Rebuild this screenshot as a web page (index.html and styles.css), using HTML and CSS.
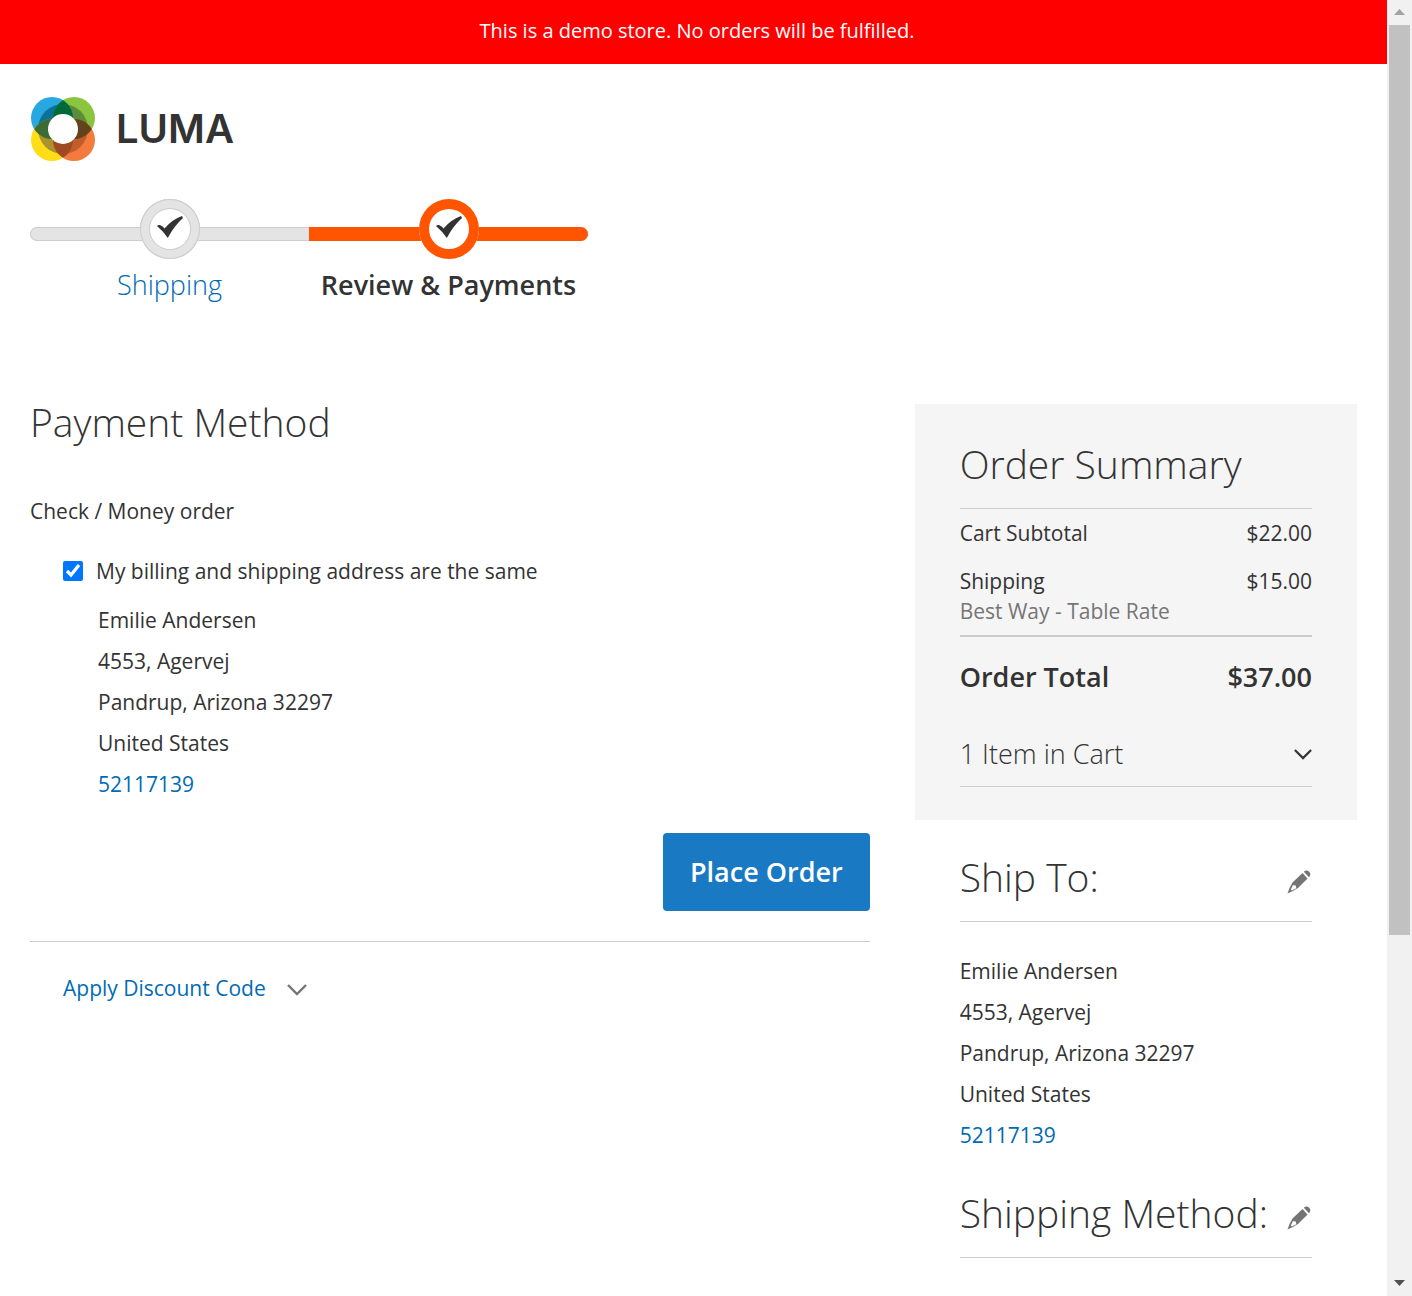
FILE: index.html
```html
<!DOCTYPE html>
<html lang="en">
<head>
<meta charset="utf-8">
<title>Checkout</title>
<link rel="stylesheet" href="styles.css">
</head>
<body>
<svg class="sprite" aria-hidden="true">
  <symbol id="check" viewBox="0 0 26 22"><path d="M0 10Q1 8.500 3 9Q6 10 7.500 12.500Q15 3.500 25 0L26 2Q17 10 10.800 22Q6 15 0 10Z"/></symbol>
  <symbol id="pencil" viewBox="0 0 24 24"><path d="M15.500 3L20.500 8.500L11 18L6 21L0.500 23.500L2.500 18L5.500 12.500ZM6 15L3.800 19.600L5 20.500L9.300 18.200L8.700 15.500Z" fill-rule="evenodd"/><path d="M16.800 1.800Q19.500 -0.800 22 1.500Q24.500 4 22 7.200Z"/></symbol>
  <symbol id="chevron" viewBox="0 0 20 12"><path d="M1 1L10 10L19 1" fill="none" stroke="currentColor" stroke-width="2.400"/></symbol>
</svg>
<div class="page">
  <p class="notice">This is a demo store. No orders will be fulfilled.</p>
  <header class="header">
    <a class="logo" href="#">
      <svg class="logo-mark" viewBox="0 0 66 66" aria-hidden="true">
        <defs>
          <clipPath id="tl"><circle cx="22" cy="22" r="21"/></clipPath>
          <clipPath id="tr"><circle cx="44" cy="22" r="21"/></clipPath>
          <clipPath id="bl"><circle cx="22" cy="44" r="21"/></clipPath>
          <clipPath id="br"><circle cx="44" cy="44" r="21"/></clipPath>
        </defs>
        <circle cx="22" cy="22" r="21" fill="#27a8e0"/>
        <circle cx="44" cy="22" r="21" fill="#8bc53f"/>
        <circle cx="22" cy="44" r="21" fill="#ffde17"/>
        <circle cx="44" cy="44" r="21" fill="#f47b3e"/>
        <circle cx="33" cy="33" r="25" fill="#0a7199" clip-path="url(#tl)"/>
        <circle cx="33" cy="33" r="25" fill="#5b8c3a" clip-path="url(#tr)"/>
        <circle cx="33" cy="33" r="25" fill="#a8932f" clip-path="url(#bl)"/>
        <circle cx="33" cy="33" r="25" fill="#c25e2e" clip-path="url(#br)"/>
        <g clip-path="url(#tl)">
          <circle cx="44" cy="22" r="21" fill="#006b38"/>
          <circle cx="22" cy="44" r="21" fill="#3d6b35"/>
        </g>
        <g clip-path="url(#br)">
          <circle cx="44" cy="22" r="21" fill="#63431c"/>
          <circle cx="22" cy="44" r="21" fill="#a04a22"/>
        </g>
        <circle cx="33" cy="33" r="15" fill="#fff"/>
      </svg>
      <span class="logo-name">LUMA</span>
    </a>
  </header>
  <ol class="steps">
    <li class="step"><span class="step-dot"><svg class="check"><use href="#check"/></svg></span><a class="step-label" href="#">Shipping</a></li>
    <li class="step step-active" aria-current="step"><span class="step-dot"><svg class="check"><use href="#check"/></svg></span><span class="step-label">Review &amp; Payments</span></li>
  </ol>
  <div class="checkout">
    <main class="payment">
      <h1 class="title">Payment Method</h1>
      <p class="method">Check / Money order</p>
      <div class="same"><input type="checkbox" id="same" checked><label for="same">My billing and shipping address are the same</label></div>
      <address class="address billing">Emilie Andersen<br>4553, Agervej<br>Pandrup, Arizona 32297<br>United States<br><a href="tel:52117139">52117139</a></address>
      <div class="actions"><button class="place-order" type="button">Place Order</button></div>
      <button class="discount" type="button">Apply Discount Code<svg class="discount-arrow"><use href="#chevron"/></svg></button>
    </main>
    <aside class="sidebar">
      <section class="summary">
        <h2 class="title ruled">Order Summary</h2>
        <table class="totals">
          <tbody>
            <tr><th scope="row">Cart Subtotal</th><td>$22.00</td></tr>
            <tr><th scope="row">Shipping<br><span class="carrier">Best Way - Table Rate</span></th><td>$15.00</td></tr>
          </tbody>
          <tfoot><tr><th scope="row">Order Total</th><td>$37.00</td></tr></tfoot>
        </table>
        <button class="cart-items" type="button">1 Item in Cart<svg class="cart-arrow"><use href="#chevron"/></svg></button>
      </section>
      <section class="info">
        <div class="info-head ruled"><h2 class="title">Ship To:</h2><button class="edit" type="button" aria-label="Edit shipping address"><svg><use href="#pencil"/></svg></button></div>
        <address class="address">Emilie Andersen<br>4553, Agervej<br>Pandrup, Arizona 32297<br>United States<br><a href="tel:52117139">52117139</a></address>
      </section>
      <section class="info">
        <div class="info-head ruled"><h2 class="title">Shipping Method:</h2><button class="edit" type="button" aria-label="Edit shipping method"><svg><use href="#pencil"/></svg></button></div>
      </section>
    </aside>
  </div>
</div>
<div class="scrollbar" aria-hidden="true">
  <svg class="arrow arrow-up" viewBox="0 0 11 6"><path d="M0 6L5.500 0L11 6Z"/></svg>
  <div class="track"><div class="thumb"></div></div>
  <svg class="arrow" viewBox="0 0 11 6"><path d="M0 0H11L5.500 6Z"/></svg>
</div>
</body>
</html>
```
FILE: styles.css
```css
*, *::before { box-sizing: border-box; }

body {
  margin: 0;
  display: flex;
  align-items: flex-start;
  background: #fff;
  color: #333;
  font: 400 21px/30px "Open Sans", "Noto Sans", sans-serif;
}

h1, h2, p, ol { margin: 0; padding: 0; }
a { color: #006bb4; text-decoration: none; }
svg { display: block; fill: currentColor; }
button { border: 0; padding: 0; background: none; color: inherit; font: inherit; cursor: pointer; }
.sprite { position: absolute; width: 0; height: 0; }

.page { flex: 1; min-width: 0; }

.notice {
  padding: 16px 38px 18px 45px;
  background: #f00;
  color: #fff;
  font-size: 20px;
  text-align: center;
}

.header { padding: 32px 30px 37px; }
.logo { display: inline-flex; align-items: center; gap: 20px; vertical-align: top; color: #333; }
.logo-mark { width: 66px; height: 66px; }
.logo-name { font: 600 40px/40px Inter, sans-serif; }

/* Progress steps */
.steps { display: flex; padding: 0 30px; list-style: none; }
.step {
  width: 279px;
  display: flex;
  flex-direction: column;
  align-items: center;
  gap: 11px;
  font-size: 27px;
}
.step::before {
  content: "";
  width: 100%;
  height: 14px;
  margin: 28px 0 -53px;
  background: #e4e4e4;
  border: 1px solid #ccc;
  border-right: 0;
  border-radius: 7px 0 0 7px;
}
.step-active::before { background: #ff5501; border-color: #ff5501; border-radius: 0 7px 7px 0; }
.step-dot {
  width: 60px;
  height: 60px;
  display: grid;
  place-items: center;
  padding-bottom: 4px;
  border-radius: 50%;
  background: #fff;
  box-shadow: inset 0 0 0 1px #ccc, inset 0 0 0 9px #e4e4e4, inset 0 0 0 10px #ccc;
}
.step-active .step-dot { box-shadow: inset 0 0 0 10px #ff5501; }
.check { width: 26px; height: 22px; }
.step-label { font-weight: 300; }
.step-active .step-label { font-weight: 600; }

/* Two columns */
.checkout { display: flex; align-items: flex-start; gap: 45px; padding: 102px 30px 0; }
.payment { flex: 1; min-width: 0; }
.sidebar { flex: none; width: calc(100% / 3); margin-top: 2px; }

.title { font-size: 39px; line-height: 40px; font-weight: 300; }
.ruled { padding-bottom: 24px; border-bottom: 1px solid #ccc; }
.address { font-style: normal; line-height: 41px; }

.payment .title { margin-bottom: 54px; }
.same { display: flex; align-items: center; gap: 13px; margin-top: 30px; padding-left: 33px; }
.same input { width: 20px; height: 20px; margin: 0; }
.billing { margin-top: 14px; padding-left: 68px; }
.actions { display: flex; justify-content: flex-end; padding: 28px 0 30px; border-bottom: 1px solid #ccc; }
.place-order {
  padding: 24px 27px;
  border-radius: 4px;
  background: #1979c3;
  color: #fff;
  font-size: 27px;
  font-weight: 600;
}
.discount { display: flex; align-items: center; gap: 21px; margin: 31px 33px; color: #006bb4; }
.discount-arrow { width: 20px; height: 12px; margin-top: 3px; color: #757575; }

.summary { padding: 40px 45px 33px; background: #f5f5f5; }
.totals { width: 100%; border-collapse: collapse; }
.totals th { padding: 9px 0; font-weight: 400; text-align: left; }
.totals td { padding: 9px 0; text-align: right; vertical-align: top; }
.carrier { color: #757575; }
.totals tfoot { border-top: 2px solid #ccc; font-size: 27px; }
.totals tfoot th, .totals tfoot td { padding: 25px 0; font-weight: 600; }
.cart-items {
  width: 100%;
  display: flex;
  align-items: center;
  justify-content: space-between;
  padding: 22px 0 17px;
  border-bottom: 1px solid #ccc;
  font-size: 27px;
  font-weight: 300;
}
.cart-arrow { width: 18px; height: 11px; }

.info { padding: 37px 45px 0; }
.info-head { display: flex; align-items: center; justify-content: space-between; }
.info .address { margin-top: 29px; }
.edit { padding: 9px 1px 0 0; color: #757575; }
.edit svg { width: 24px; height: 24px; }

/* Window scrollbar */
.scrollbar {
  width: 25px;
  height: 100vh;
  position: sticky;
  top: 0;
  display: flex;
  flex-direction: column;
  align-items: center;
  background: #f1f1f1;
  color: #505050;
}
.arrow { width: 11px; height: 6px; margin: 9px 0 10px; }
.arrow-up { color: #a3a3a3; }
.track { flex: 1; align-self: stretch; padding: 0 2px; }
.thumb { height: 73%; background: #c1c1c1; }
```
